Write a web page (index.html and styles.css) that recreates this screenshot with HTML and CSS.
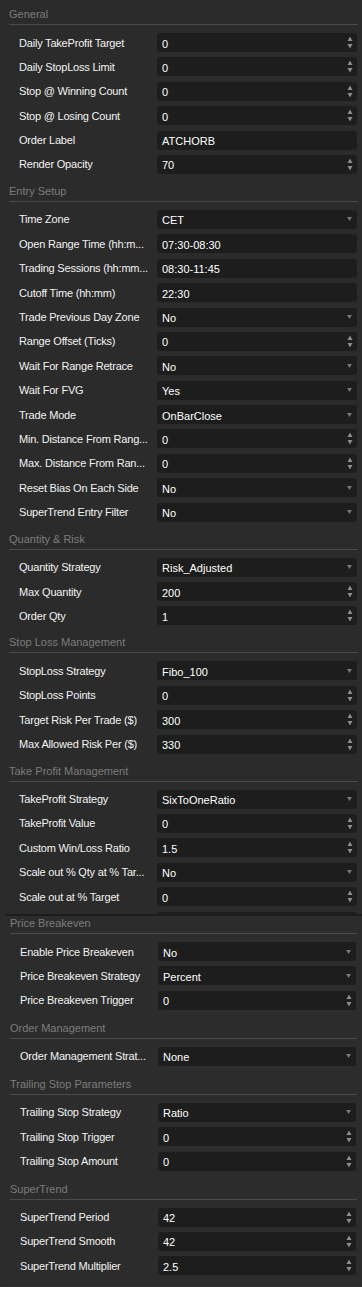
FILE: index.html
```html
<!DOCTYPE html>
<html lang="en">
<head>
    <meta charset="UTF-8">
    <meta name="viewport" content="width=device-width, initial-scale=1.0">
    <title>Strategy Parameters</title>
    <link rel="stylesheet" href="styles.css">
</head>
<body>
<div class="page">

    <!-- upper panel, scrolled part -->
    <div class="panel panel-upper">

        <div class="section">
            <div class="section-head">General</div>
            <div class="rows">
                <div class="row"><span class="label">Daily TakeProfit Target</span><div class="field spin"><span class="value">0</span><svg class="spinner" viewBox="0 0 6 13"><polygon points="0.5,5 3,0.5 5.5,5"/><polygon points="0.5,8 5.5,8 3,12.5"/></svg></div></div>
                <div class="row"><span class="label">Daily StopLoss Limit</span><div class="field spin"><span class="value">0</span><svg class="spinner" viewBox="0 0 6 13"><polygon points="0.5,5 3,0.5 5.5,5"/><polygon points="0.5,8 5.5,8 3,12.5"/></svg></div></div>
                <div class="row"><span class="label">Stop @ Winning Count</span><div class="field spin"><span class="value">0</span><svg class="spinner" viewBox="0 0 6 13"><polygon points="0.5,5 3,0.5 5.5,5"/><polygon points="0.5,8 5.5,8 3,12.5"/></svg></div></div>
                <div class="row"><span class="label">Stop @ Losing Count</span><div class="field spin"><span class="value">0</span><svg class="spinner" viewBox="0 0 6 13"><polygon points="0.5,5 3,0.5 5.5,5"/><polygon points="0.5,8 5.5,8 3,12.5"/></svg></div></div>
                <div class="row"><span class="label">Order Label</span><div class="field"><span class="value">ATCHORB</span></div></div>
                <div class="row"><span class="label">Render Opacity</span><div class="field spin"><span class="value">70</span><svg class="spinner" viewBox="0 0 6 13"><polygon points="0.5,5 3,0.5 5.5,5"/><polygon points="0.5,8 5.5,8 3,12.5"/></svg></div></div>
            </div>
        </div>

        <div class="section">
            <div class="section-head">Entry Setup</div>
            <div class="rows">
                <div class="row"><span class="label">Time Zone</span><div class="field select"><span class="value">CET</span><svg class="caret" viewBox="0 0 6 5"><polygon points="0,0 6,0 3,5"/></svg></div></div>
                <div class="row"><span class="label">Open Range Time (hh:m...</span><div class="field"><span class="value">07:30-08:30</span></div></div>
                <div class="row"><span class="label">Trading Sessions (hh:mm...</span><div class="field"><span class="value">08:30-11:45</span></div></div>
                <div class="row"><span class="label">Cutoff Time (hh:mm)</span><div class="field"><span class="value">22:30</span></div></div>
                <div class="row"><span class="label">Trade Previous Day Zone</span><div class="field select"><span class="value">No</span><svg class="caret" viewBox="0 0 6 5"><polygon points="0,0 6,0 3,5"/></svg></div></div>
                <div class="row"><span class="label">Range Offset (Ticks)</span><div class="field spin"><span class="value">0</span><svg class="spinner" viewBox="0 0 6 13"><polygon points="0.5,5 3,0.5 5.5,5"/><polygon points="0.5,8 5.5,8 3,12.5"/></svg></div></div>
                <div class="row"><span class="label">Wait For Range Retrace</span><div class="field select"><span class="value">No</span><svg class="caret" viewBox="0 0 6 5"><polygon points="0,0 6,0 3,5"/></svg></div></div>
                <div class="row"><span class="label">Wait For FVG</span><div class="field select"><span class="value">Yes</span><svg class="caret" viewBox="0 0 6 5"><polygon points="0,0 6,0 3,5"/></svg></div></div>
                <div class="row"><span class="label">Trade Mode</span><div class="field select"><span class="value">OnBarClose</span><svg class="caret" viewBox="0 0 6 5"><polygon points="0,0 6,0 3,5"/></svg></div></div>
                <div class="row"><span class="label">Min. Distance From Rang...</span><div class="field spin"><span class="value">0</span><svg class="spinner" viewBox="0 0 6 13"><polygon points="0.5,5 3,0.5 5.5,5"/><polygon points="0.5,8 5.5,8 3,12.5"/></svg></div></div>
                <div class="row"><span class="label">Max. Distance From Ran...</span><div class="field spin"><span class="value">0</span><svg class="spinner" viewBox="0 0 6 13"><polygon points="0.5,5 3,0.5 5.5,5"/><polygon points="0.5,8 5.5,8 3,12.5"/></svg></div></div>
                <div class="row"><span class="label">Reset Bias On Each Side</span><div class="field select"><span class="value">No</span><svg class="caret" viewBox="0 0 6 5"><polygon points="0,0 6,0 3,5"/></svg></div></div>
                <div class="row"><span class="label">SuperTrend Entry Filter</span><div class="field select"><span class="value">No</span><svg class="caret" viewBox="0 0 6 5"><polygon points="0,0 6,0 3,5"/></svg></div></div>
            </div>
        </div>

        <div class="section">
            <div class="section-head">Quantity &amp; Risk</div>
            <div class="rows">
                <div class="row"><span class="label">Quantity Strategy</span><div class="field select"><span class="value">Risk_Adjusted</span><svg class="caret" viewBox="0 0 6 5"><polygon points="0,0 6,0 3,5"/></svg></div></div>
                <div class="row"><span class="label">Max Quantity</span><div class="field spin"><span class="value">200</span><svg class="spinner" viewBox="0 0 6 13"><polygon points="0.5,5 3,0.5 5.5,5"/><polygon points="0.5,8 5.5,8 3,12.5"/></svg></div></div>
                <div class="row"><span class="label">Order Qty</span><div class="field spin"><span class="value">1</span><svg class="spinner" viewBox="0 0 6 13"><polygon points="0.5,5 3,0.5 5.5,5"/><polygon points="0.5,8 5.5,8 3,12.5"/></svg></div></div>
            </div>
        </div>

        <div class="section">
            <div class="section-head">Stop Loss Management</div>
            <div class="rows">
                <div class="row"><span class="label">StopLoss Strategy</span><div class="field select"><span class="value">Fibo_100</span><svg class="caret" viewBox="0 0 6 5"><polygon points="0,0 6,0 3,5"/></svg></div></div>
                <div class="row"><span class="label">StopLoss Points</span><div class="field spin"><span class="value">0</span><svg class="spinner" viewBox="0 0 6 13"><polygon points="0.5,5 3,0.5 5.5,5"/><polygon points="0.5,8 5.5,8 3,12.5"/></svg></div></div>
                <div class="row"><span class="label">Target Risk Per Trade ($)</span><div class="field spin"><span class="value">300</span><svg class="spinner" viewBox="0 0 6 13"><polygon points="0.5,5 3,0.5 5.5,5"/><polygon points="0.5,8 5.5,8 3,12.5"/></svg></div></div>
                <div class="row"><span class="label">Max Allowed Risk Per ($)</span><div class="field spin"><span class="value">330</span><svg class="spinner" viewBox="0 0 6 13"><polygon points="0.5,5 3,0.5 5.5,5"/><polygon points="0.5,8 5.5,8 3,12.5"/></svg></div></div>
            </div>
        </div>

        <div class="section">
            <div class="section-head">Take Profit Management</div>
            <div class="rows">
                <div class="row"><span class="label">TakeProfit Strategy</span><div class="field select"><span class="value">SixToOneRatio</span><svg class="caret" viewBox="0 0 6 5"><polygon points="0,0 6,0 3,5"/></svg></div></div>
                <div class="row"><span class="label">TakeProfit Value</span><div class="field spin"><span class="value">0</span><svg class="spinner" viewBox="0 0 6 13"><polygon points="0.5,5 3,0.5 5.5,5"/><polygon points="0.5,8 5.5,8 3,12.5"/></svg></div></div>
                <div class="row"><span class="label">Custom Win/Loss Ratio</span><div class="field spin"><span class="value">1.5</span><svg class="spinner" viewBox="0 0 6 13"><polygon points="0.5,5 3,0.5 5.5,5"/><polygon points="0.5,8 5.5,8 3,12.5"/></svg></div></div>
                <div class="row"><span class="label">Scale out % Qty at % Tar...</span><div class="field select"><span class="value">No</span><svg class="caret" viewBox="0 0 6 5"><polygon points="0,0 6,0 3,5"/></svg></div></div>
                <div class="row"><span class="label">Scale out at % Target</span><div class="field spin"><span class="value">0</span><svg class="spinner" viewBox="0 0 6 13"><polygon points="0.5,5 3,0.5 5.5,5"/><polygon points="0.5,8 5.5,8 3,12.5"/></svg></div></div>
                <div class="row"><span class="label"></span><div class="field"></div></div>
            </div>
        </div>
    </div>

    <div class="panel panel-lower">
        <div class="scroll">

            <div class="section">
                <div class="section-head">Price Breakeven</div>
                <div class="rows">
                    <div class="row"><span class="label">Enable Price Breakeven</span><div class="field select"><span class="value">No</span><svg class="caret" viewBox="0 0 6 5"><polygon points="0,0 6,0 3,5"/></svg></div></div>
                    <div class="row"><span class="label">Price Breakeven Strategy</span><div class="field select"><span class="value">Percent</span><svg class="caret" viewBox="0 0 6 5"><polygon points="0,0 6,0 3,5"/></svg></div></div>
                    <div class="row"><span class="label">Price Breakeven Trigger</span><div class="field spin"><span class="value">0</span><svg class="spinner" viewBox="0 0 6 13"><polygon points="0.5,5 3,0.5 5.5,5"/><polygon points="0.5,8 5.5,8 3,12.5"/></svg></div></div>
                </div>
            </div>

            <div class="section">
                <div class="section-head">Order Management</div>
                <div class="rows">
                    <div class="row"><span class="label">Order Management Strat...</span><div class="field select"><span class="value">None</span><svg class="caret" viewBox="0 0 6 5"><polygon points="0,0 6,0 3,5"/></svg></div></div>
                </div>
            </div>

            <div class="section">
                <div class="section-head">Trailing Stop Parameters</div>
                <div class="rows">
                    <div class="row"><span class="label">Trailing Stop Strategy</span><div class="field select"><span class="value">Ratio</span><svg class="caret" viewBox="0 0 6 5"><polygon points="0,0 6,0 3,5"/></svg></div></div>
                    <div class="row"><span class="label">Trailing Stop Trigger</span><div class="field spin"><span class="value">0</span><svg class="spinner" viewBox="0 0 6 13"><polygon points="0.5,5 3,0.5 5.5,5"/><polygon points="0.5,8 5.5,8 3,12.5"/></svg></div></div>
                    <div class="row"><span class="label">Trailing Stop Amount</span><div class="field spin"><span class="value">0</span><svg class="spinner" viewBox="0 0 6 13"><polygon points="0.5,5 3,0.5 5.5,5"/><polygon points="0.5,8 5.5,8 3,12.5"/></svg></div></div>
                </div>
            </div>

            <div class="section">
                <div class="section-head">SuperTrend</div>
                <div class="rows">
                    <div class="row"><span class="label">SuperTrend Period</span><div class="field spin"><span class="value">42</span><svg class="spinner" viewBox="0 0 6 13"><polygon points="0.5,5 3,0.5 5.5,5"/><polygon points="0.5,8 5.5,8 3,12.5"/></svg></div></div>
                    <div class="row"><span class="label">SuperTrend Smooth</span><div class="field spin"><span class="value">42</span><svg class="spinner" viewBox="0 0 6 13"><polygon points="0.5,5 3,0.5 5.5,5"/><polygon points="0.5,8 5.5,8 3,12.5"/></svg></div></div>
                    <div class="row"><span class="label">SuperTrend Multiplier</span><div class="field spin"><span class="value">2.5</span><svg class="spinner" viewBox="0 0 6 13"><polygon points="0.5,5 3,0.5 5.5,5"/><polygon points="0.5,8 5.5,8 3,12.5"/></svg></div></div>
                </div>
            </div>

        </div>
    </div>
</div>
</body>
</html>
```

FILE: styles.css
```css
body {
    margin: 0;
    padding: 0;
    background-color: #ffffff;
    font-family: "Liberation Sans", Arial, sans-serif;
    font-size: 11px;
}

.page {
    width: 362px;
    height: 1287px;
    background-color: #2b2b2b;
}

.panel {
    background-color: #2b2b2b;
    overflow: hidden;
}

.panel-upper {
    height: 914px;
    padding: 0 4px 0 9px;
}

.panel-lower {
    height: 374px;
    margin-left: 5px;
    padding: 0 5px 0 5px;
    border-top: 2px solid #1c1c1c;
    background-color: #2c2c2c;
}

.scroll {
    margin-top: -7px;
}

.section-head {
    height: 25px;
    box-sizing: border-box;
    padding-top: 7px;
    line-height: 14px;
    color: #7c7c7c;
    border-bottom: 1px solid #4a4a4a;
}

.rows {
    display: flex;
    flex-direction: column;
    gap: 5.4px;
    padding: 8px 0 3px;
}

.panel-lower .rows {
    padding-bottom: 4px;
}

.row {
    display: grid;
    grid-template-columns: 148px 1fr;
    align-items: center;
    height: 19px;
}

.label {
    padding-left: 10px;
    color: #f2f2f2;
    letter-spacing: -0.2px;
    white-space: nowrap;
    overflow: hidden;
}

.field {
    display: flex;
    align-items: center;
    justify-content: space-between;
    height: 19px;
    margin-right: 1px;
    padding: 0 4px 0 5px;
    background-color: #1d1d1d;
    border-radius: 3px;
}

.value {
    color: #ffffff;
    padding-top: 2px;
}

.spinner {
    width: 6px;
    height: 13px;
    fill: #8e8e8e;
}

.caret {
    width: 5px;
    height: 4px;
    margin-right: 1px;
    fill: #7a7a7a;
}
```
